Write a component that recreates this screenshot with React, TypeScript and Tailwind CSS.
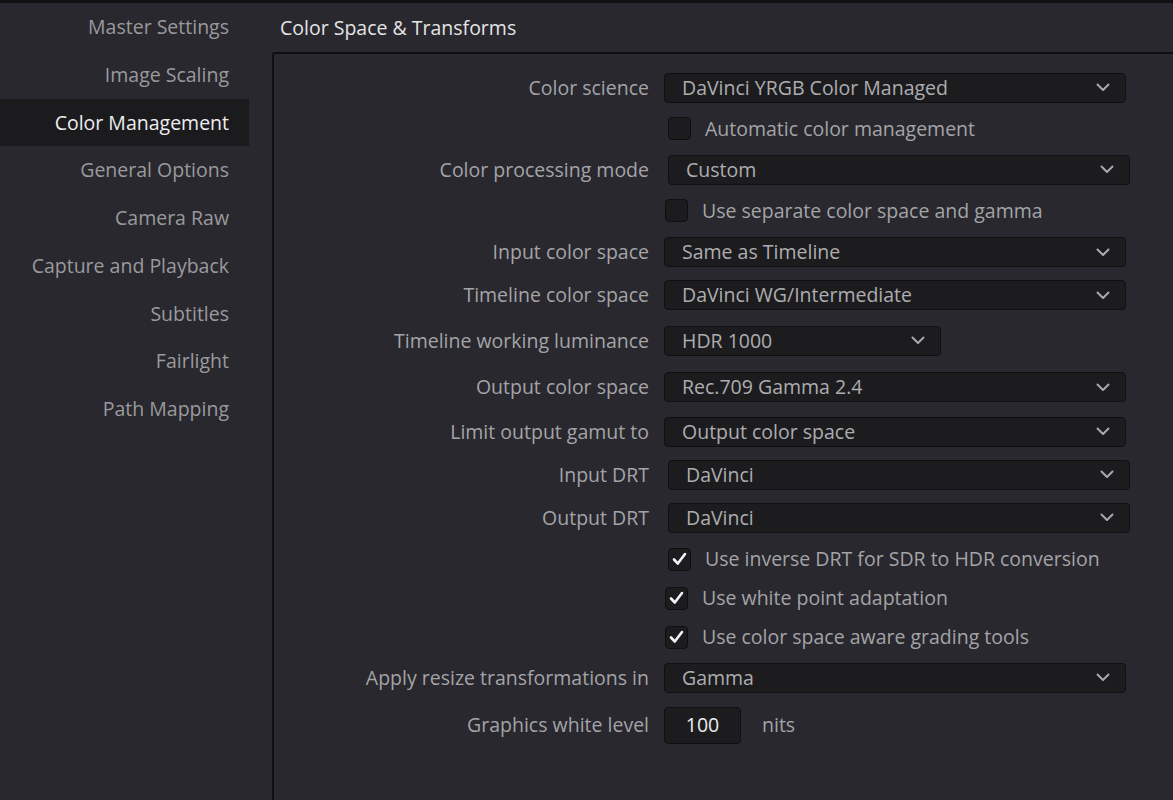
import React from "react";

const font = { fontFamily: '"Open Sans", "Noto Sans", sans-serif' };

const sideItems = [
  "Master Settings",
  "Image Scaling",
  "Color Management",
  "General Options",
  "Camera Raw",
  "Capture and Playback",
  "Subtitles",
  "Fairlight",
  "Path Mapping",
];

function Chevron() {
  return (
    <svg width="14" height="9" viewBox="0 0 14 9" fill="none">
      <path d="M1.5 1.5 L7 7 L12.5 1.5" stroke="#a9a9ab" strokeWidth="2" strokeLinecap="round" strokeLinejoin="round" />
    </svg>
  );
}

function Select({ value, wide = true, shift = false }: { value: string; wide?: boolean; shift?: boolean }) {
  return (
    <div
      className={
        (shift ? "ml-[19px] " : "ml-[15px] ") +
        (wide ? "w-[462px] " : "w-[277px] ") +
        "h-[30px] flex items-center justify-between rounded-[4px] border border-[#101012] bg-[#1c1c1f] pl-[17px] pr-[15px] text-[#adadb0]"
      }
    >
      <span>{value}</span>
      <Chevron />
    </div>
  );
}

function Check({ label, checked = false, shift = false }: { label: string; checked?: boolean; shift?: boolean }) {
  return (
    <div className={(shift ? "ml-[19px] " : "ml-[16px] ") + "flex items-center"}>
      <div className="w-[23px] h-[23px] rounded-[4px] border border-[#0f0f11] bg-[#1c1c1f] flex items-center justify-center">
        {checked && (
          <svg width="15" height="14" viewBox="0 0 15 14" fill="none">
            <path d="M2 7.5 L5.8 11.5 L13 2" stroke="#f2f2f2" strokeWidth="2.6" strokeLinecap="round" strokeLinejoin="round" />
          </svg>
        )}
      </div>
      <span className="ml-[14px] text-[#a4a4a7]">{label}</span>
    </div>
  );
}

function Row({ h, label, children }: { h: string; label?: string; children: React.ReactNode }) {
  return (
    <div className={h + " flex items-center"}>
      <div className="w-[375px] text-right text-[#a4a4a7] whitespace-nowrap">{label ?? ""}</div>
      {children}
    </div>
  );
}

export default function App() {
  return (
    <div className="w-full h-[800px] overflow-hidden bg-[#28282e] text-[19.5px] leading-none" style={font}>
      <div className="h-[3px] bg-[#121214]" />
      <div className="flex">
        <div className="w-[249px] shrink-0 flex flex-col">
          {sideItems.map((s) => (
            <div
              key={s}
              className={
                "h-[47.75px] flex items-center justify-end pr-[20px] whitespace-nowrap " +
                (s === "Color Management" ? "bg-[#1b1b1e] text-[#ededee]" : "text-[#9a9a9d]")
              }
            >
              {s}
            </div>
          ))}
        </div>
        <div className="ml-[23px] flex-1 flex flex-col">
          <div className="h-[49px] flex items-center pl-[8px] text-[#e4e4e6]">Color Space &amp; Transforms</div>
          <div className="border-l-2 border-t-2 border-[#0f0f11] rounded-tl-[3px] pt-[13px] h-[800px]">
            <Row h="h-[41px]" label="Color science">
              <Select value="DaVinci YRGB Color Managed" />
            </Row>
            <Row h="h-[41px]">
              <Check label="Automatic color management" shift />
            </Row>
            <Row h="h-[41px]" label="Color processing mode">
              <Select value="Custom" shift />
            </Row>
            <Row h="h-[41px]">
              <Check label="Use separate color space and gamma" />
            </Row>
            <Row h="h-[42px]" label="Input color space">
              <Select value="Same as Timeline" />
            </Row>
            <Row h="h-[44px]" label="Timeline color space">
              <Select value="DaVinci WG/Intermediate" />
            </Row>
            <Row h="h-[47px]" label="Timeline working luminance">
              <Select value="HDR 1000" wide={false} />
            </Row>
            <Row h="h-[46px]" label="Output color space">
              <Select value="Rec.709 Gamma 2.4" />
            </Row>
            <Row h="h-[43px]" label="Limit output gamut to">
              <Select value="Output color space" />
            </Row>
            <Row h="h-[43px]" label="Input DRT">
              <Select value="DaVinci" shift />
            </Row>
            <Row h="h-[43px]" label="Output DRT">
              <Select value="DaVinci" shift />
            </Row>
            <Row h="h-[40px]">
              <Check label="Use inverse DRT for SDR to HDR conversion" checked shift />
            </Row>
            <Row h="h-[38px]">
              <Check label="Use white point adaptation" checked />
            </Row>
            <Row h="h-[40px]">
              <Check label="Use color space aware grading tools" checked />
            </Row>
            <Row h="h-[41px]" label="Apply resize transformations in">
              <Select value="Gamma" />
            </Row>
            <Row h="h-[54px]" label="Graphics white level">
              <div className="ml-[15px] w-[77px] h-[37px] rounded-[4px] border border-[#101012] bg-[#1c1c1f] flex items-center justify-center text-[#ededee]">
                100
              </div>
              <span className="ml-[21px] text-[#a4a4a7]">nits</span>
            </Row>
          </div>
        </div>
      </div>
    </div>
  );
}
